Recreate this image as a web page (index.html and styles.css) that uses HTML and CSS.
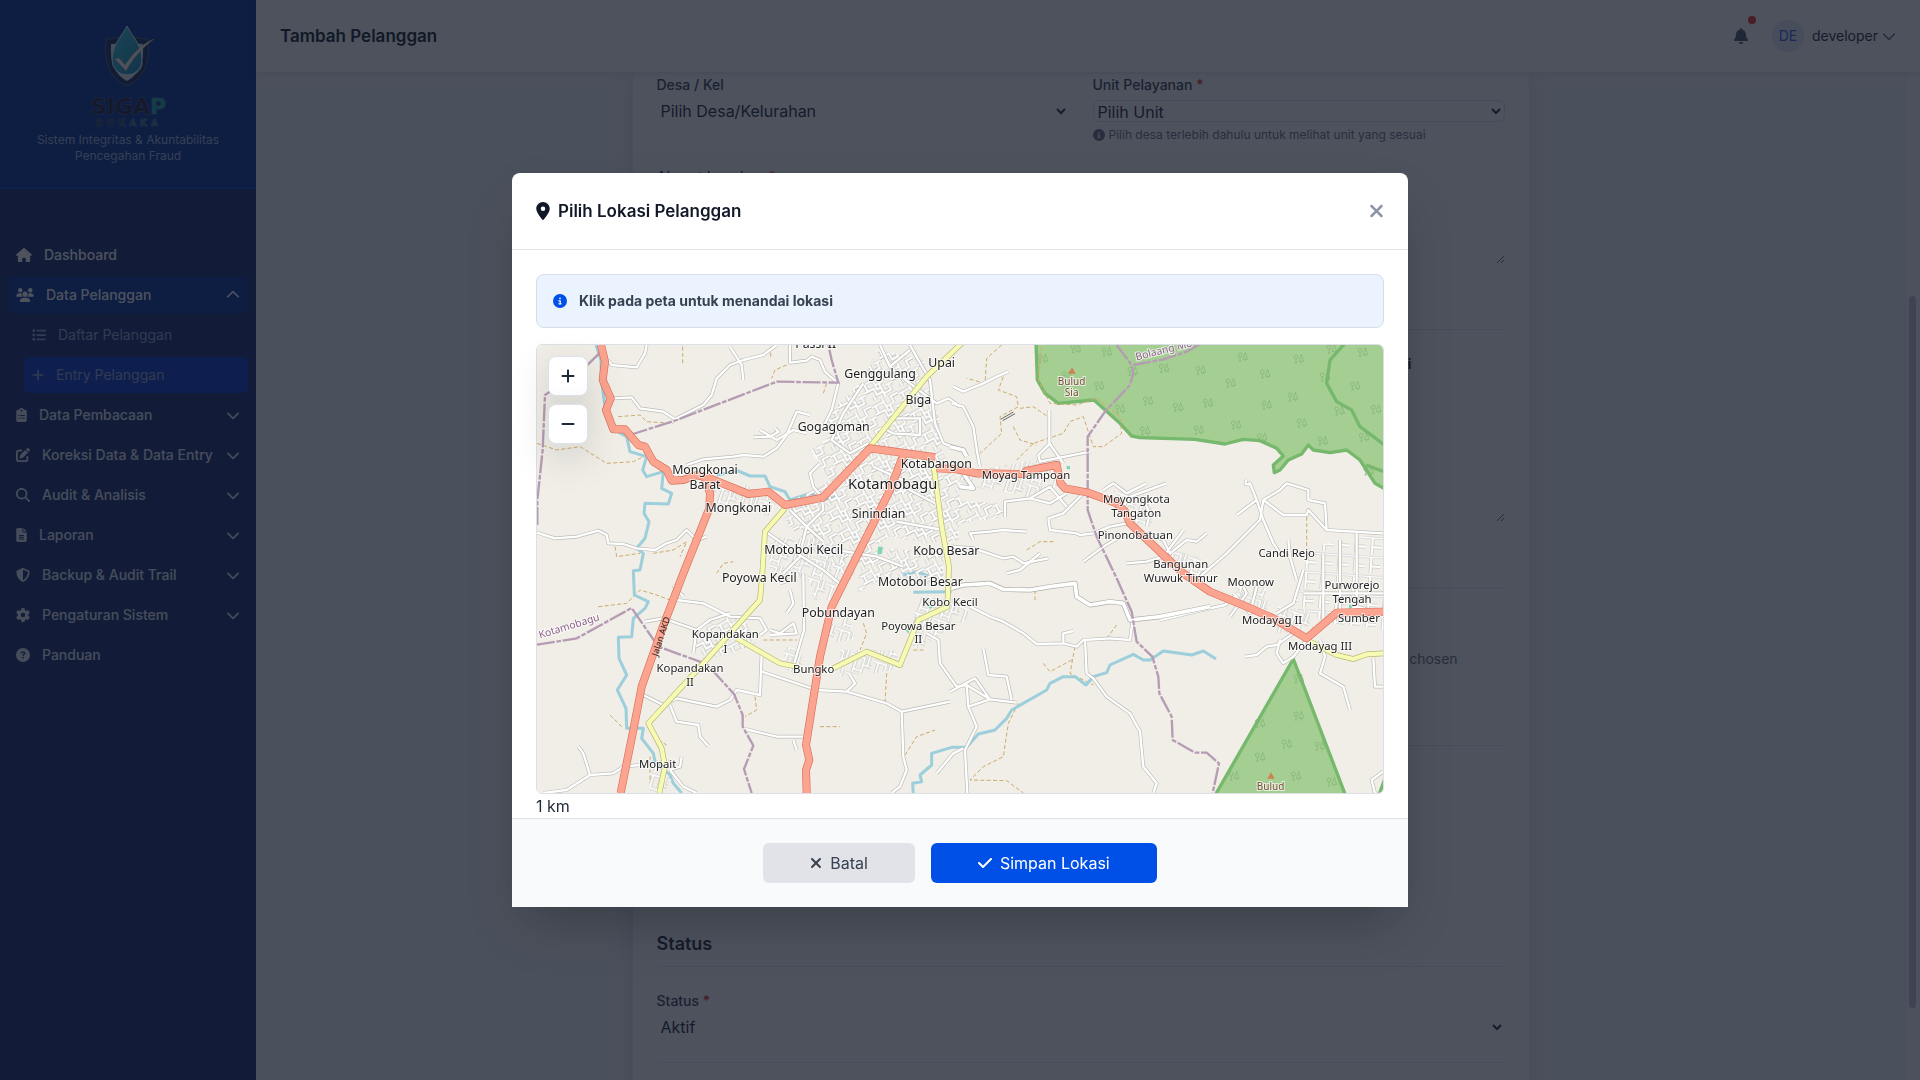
FILE: index.html
```html
<!DOCTYPE html>
<html lang="id">
<head>
<meta charset="utf-8">
<meta name="viewport" content="width=device-width, initial-scale=1">
<title>Tambah Pelanggan</title>
<link rel="stylesheet" href="styles.css">
</head>
<body>
<svg class="sprite" aria-hidden="true">
  <symbol id="i-home" viewBox="0 0 576 512"><path d="M575.8 255.5c0 18-15 32.1-32 32.1h-32l.7 160.2c0 2.7-.2 5.4-.5 8.1V472c0 22.1-17.9 40-40 40H456c-1.1 0-2.2 0-3.3-.1c-1.4 .1-2.8 .1-4.2 .1H416 392c-22.1 0-40-17.9-40-40V448 384c0-17.7-14.3-32-32-32H256c-17.7 0-32 14.3-32 32v64 24c0 22.1-17.9 40-40 40H160 128.1c-1.5 0-3-.1-4.5-.2c-1.2 .1-2.4 .2-3.6 .2H104c-22.1 0-40-17.9-40-40V360c0-.9 0-1.9 .1-2.8V287.6H32c-18 0-32-14-32-32.1c0-9 3-17 10-24L266.4 8c7-7 15-8 22-8s15 2 21 7L564.8 231.5c8 7 12 15 11 24z"/></symbol>
  <symbol id="i-users" viewBox="0 0 640 512"><circle cx="144" cy="80" r="80"/><circle cx="512" cy="80" r="80"/><circle cx="320" cy="224" r="96"/><path d="M0 298.700C0 239.800 47.800 192 106.700 192h42.700c15.900 0 31 3.500 44.600 9.700a128 128 0 0 0 41.200 118.300H21.300C9.600 320 0 310.400 0 298.700zM405.300 320h213.300c11.800 0 21.400-9.600 21.400-21.300C640 239.800 592.200 192 533.300 192h-42.700c-15.900 0-31 3.500-44.600 9.700a128 128 0 0 1-40.700 118.300zM128 485.300C128 411.700 187.700 352 261.300 352h117.400C452.300 352 512 411.700 512 485.300c0 14.700-11.900 26.700-26.700 26.700H154.700C140 512 128 500 128 485.300z"/></symbol>
  <symbol id="i-list" viewBox="0 0 512 512"><rect x="16" y="48" width="96" height="96" rx="24"/><rect x="16" y="208" width="96" height="96" rx="24"/><rect x="16" y="368" width="96" height="96" rx="24"/><rect x="160" y="64" width="352" height="64" rx="32"/><rect x="160" y="224" width="352" height="64" rx="32"/><rect x="160" y="384" width="352" height="64" rx="32"/></symbol>
  <symbol id="i-plus" viewBox="0 0 448 512"><path d="M256 80c0-17.700-14.300-32-32-32s-32 14.300-32 32V224H48c-17.700 0-32 14.300-32 32s14.300 32 32 32H192V432c0 17.700 14.300 32 32 32s32-14.300 32-32V288H400c17.700 0 32-14.300 32-32s-14.300-32-32-32H256V80z"/></symbol>
  <symbol id="i-minus" viewBox="0 0 448 512"><rect x="16" y="224" width="416" height="64" rx="32"/></symbol>
  <symbol id="i-clip" viewBox="0 0 384 512"><path fill-rule="evenodd" d="M192 0c-41.800 0-77.400 26.700-90.500 64H64C28.700 64 0 92.700 0 128V448c0 35.300 28.700 64 64 64H320c35.300 0 64-28.700 64-64V128c0-35.300-28.700-64-64-64H282.500C269.400 26.700 233.800 0 192 0zM192 64a32 32 0 1 1 0 64 32 32 0 1 1 0-64zM72 272a24 24 0 1 1 48 0 24 24 0 1 1-48 0zM160 256H304a16 16 0 0 1 0 32H160a16 16 0 0 1 0-32zM72 368a24 24 0 1 1 48 0 24 24 0 1 1-48 0zM160 352H304a16 16 0 0 1 0 32H160a16 16 0 0 1 0-32z"/></symbol>
  <symbol id="i-edit" viewBox="0 0 512 512"><path d="M471.600 21.700c-21.900-21.900-57.300-21.900-79.200 0L362.300 51.700l97.900 97.900 30.100-30.100c21.900-21.900 21.900-57.300 0-79.200L471.600 21.700zm-299.200 220c-6.100 6.100-10.800 13.600-13.500 21.900l-29.600 88.800c-2.900 8.600-.6 18.100 5.800 24.600s15.900 8.700 24.600 5.800l88.800-29.600c8.200-2.700 15.700-7.400 21.900-13.500L437.700 172.300 339.700 74.300 172.400 241.700zM96 64C43 64 0 107 0 160V416c0 53 43 96 96 96H352c53 0 96-43 96-96V320c0-17.700-14.300-32-32-32s-32 14.300-32 32v96c0 17.700-14.300 32-32 32H96c-17.700 0-32-14.300-32-32V160c0-17.700 14.300-32 32-32h96c17.700 0 32-14.300 32-32s-14.300-32-32-32H96z"/></symbol>
  <symbol id="i-search" viewBox="0 0 512 512"><path d="M416 208c0 45.900-14.900 88.300-40 122.700L502.600 457.400c12.500 12.500 12.500 32.800 0 45.300s-32.800 12.500-45.300 0L330.700 376c-34.400 25.200-76.800 40-122.700 40C93.100 416 0 322.900 0 208S93.100 0 208 0S416 93.100 416 208zM208 352a144 144 0 1 0 0-288 144 144 0 1 0 0 288z"/></symbol>
  <symbol id="i-file" viewBox="0 0 384 512"><path fill-rule="evenodd" d="M64 0C28.700 0 0 28.700 0 64V448c0 35.300 28.700 64 64 64H320c35.300 0 64-28.700 64-64V160H256c-17.700 0-32-14.300-32-32V0H64zM256 0V128H384L256 0zM112 256H272a16 16 0 0 1 0 32H112a16 16 0 0 1 0-32zM112 320H272a16 16 0 0 1 0 32H112a16 16 0 0 1 0-32zM112 384H272a16 16 0 0 1 0 32H112a16 16 0 0 1 0-32z"/></symbol>
  <symbol id="i-shield" viewBox="0 0 512 512"><path d="M256 0c4.600 0 9.200 1 13.400 2.900L457.700 82.800c22 9.300 38.400 31 38.300 57.200c-.5 99.200-41.300 280.700-213.600 363.200c-16.700 8-36.100 8-52.800 0C57.300 420.700 16.500 239.200 16 140c-.1-26.200 16.300-47.900 38.300-57.200L242.700 2.900C246.800 1 251.400 0 256 0zm0 66.800V444.800C394 378 431.100 230.100 432 141.400L256 66.800z"/></symbol>
  <symbol id="i-gear" viewBox="0 0 512 512"><path d="M495.900 166.600c3.200 8.700 .5 18.400-6.400 24.600l-43.300 39.400c1.100 8.300 1.700 16.800 1.700 25.400s-.6 17.100-1.700 25.400l43.300 39.400c6.900 6.200 9.600 15.900 6.400 24.600c-4.400 11.900-9.700 23.300-15.800 34.300l-4.700 8.100c-6.600 11-14 21.400-22.100 31.200c-5.900 7.200-15.700 9.600-24.500 6.800l-55.700-17.700c-13.400 10.300-28.200 18.900-44 25.400l-12.500 57.100c-2 9.100-9 16.300-18.200 17.800c-13.800 2.300-28 3.500-42.500 3.500s-28.700-1.200-42.500-3.500c-9.200-1.500-16.200-8.700-18.200-17.800l-12.500-57.100c-15.800-6.500-30.600-15.100-44-25.400L83.100 425.900c-8.800 2.800-18.600 .3-24.500-6.800c-8.100-9.800-15.500-20.200-22.100-31.200l-4.700-8.100c-6.100-11-11.400-22.400-15.800-34.300c-3.200-8.700-.5-18.400 6.400-24.600l43.300-39.400C64.600 273.100 64 264.600 64 256s.6-17.100 1.700-25.400L22.400 191.200c-6.900-6.200-9.600-15.900-6.400-24.600c4.400-11.900 9.700-23.300 15.800-34.300l4.700-8.100c6.600-11 14-21.400 22.100-31.200c5.900-7.200 15.700-9.600 24.500-6.800l55.700 17.700c13.400-10.300 28.200-18.900 44-25.400l12.500-57.100c2-9.100 9-16.300 18.200-17.800C227.300 1.200 241.500 0 256 0s28.700 1.200 42.500 3.500c9.200 1.500 16.200 8.700 18.200 17.800l12.500 57.100c15.800 6.500 30.600 15.100 44 25.400l55.700-17.700c8.800-2.800 18.600-.3 24.500 6.800c8.100 9.800 15.500 20.200 22.100 31.200l4.700 8.100c6.100 11 11.400 22.400 15.800 34.300zM256 336a80 80 0 1 0 0-160 80 80 0 1 0 0 160z"/></symbol>
  <symbol id="i-help" viewBox="0 0 512 512"><path d="M256 512A256 256 0 1 0 256 0a256 256 0 1 0 0 512zM169.800 165.300c7.900-22.300 29.100-37.300 52.800-37.300h58.300c34.900 0 63.100 28.300 63.100 63.100c0 22.600-12.100 43.500-31.700 54.800L280 264.400c-.2 13-10.900 23.600-24 23.600c-13.300 0-24-10.700-24-24V250.500c0-8.600 4.600-16.500 12.100-20.800l44.300-25.400c4.700-2.700 7.600-7.700 7.600-13.100c0-8.400-6.800-15.100-15.100-15.100H222.600c-3.400 0-6.400 2.100-7.500 5.300l-.4 1.200c-4.400 12.500-18.200 19-30.600 14.600s-19-18.200-14.600-30.600l.4-1.200zM224 352a32 32 0 1 1 64 0 32 32 0 1 1 -64 0z"/></symbol>
  <symbol id="i-info" viewBox="0 0 512 512"><path d="M256 512A256 256 0 1 0 256 0a256 256 0 1 0 0 512zM216 336h24V272H216c-13.300 0-24-10.700-24-24s10.700-24 24-24h48c13.300 0 24 10.700 24 24v88h8c13.300 0 24 10.700 24 24s-10.700 24-24 24H216c-13.300 0-24-10.700-24-24s10.700-24 24-24zm40-208a32 32 0 1 1 0 64 32 32 0 1 1 0-64z"/></symbol>
  <symbol id="i-down" viewBox="0 0 512 512"><path d="M233.400 406.600c12.500 12.500 32.800 12.500 45.300 0l192-192c12.500-12.500 12.500-32.800 0-45.300s-32.800-12.500-45.300 0L256 338.700 86.600 169.400c-12.500-12.500-32.800-12.500-45.300 0s-12.500 32.800 0 45.300l192 192z"/></symbol>
  <symbol id="i-bell" viewBox="0 0 448 512"><path d="M224 0c-17.700 0-32 14.300-32 32V51.200C119 66 64 130.600 64 208v18.800c0 47-17.300 92.400-48.500 127.600l-7.400 8.300c-8.400 9.400-10.400 22.900-5.300 34.400S19.400 416 32 416H416c12.600 0 24-7.400 29.200-18.900s3.100-25-5.300-34.400l-7.400-8.300C401.300 319.200 384 273.900 384 226.800V208c0-77.400-55-142-128-156.800V32c0-17.700-14.300-32-32-32zm45.300 493.300c12-12 18.700-28.300 18.700-45.300H224 160c0 17 6.700 33.300 18.700 45.300s28.300 18.700 45.300 18.700s33.300-6.700 45.300-18.700z"/></symbol>
  <symbol id="i-pin" viewBox="0 0 384 512"><path d="M215.700 499.200C267 435 384 279.400 384 192C384 86 298 0 192 0S0 86 0 192c0 87.400 117 243 168.300 307.200c12.300 15.300 35.100 15.300 47.400 0zM192 128a64 64 0 1 1 0 128 64 64 0 1 1 0-128z"/></symbol>
  <symbol id="i-x" viewBox="0 0 384 512"><path d="M342.600 150.600c12.500-12.500 12.500-32.800 0-45.300s-32.800-12.500-45.300 0L192 210.700 86.600 105.400c-12.500-12.500-32.800-12.500-45.300 0s-12.500 32.800 0 45.300L146.700 256 41.400 361.400c-12.500 12.500-12.500 32.800 0 45.300s32.800 12.500 45.300 0L192 301.300 297.400 406.600c12.500 12.500 32.800 12.500 45.300 0s12.500-32.800 0-45.300L237.300 256 342.600 150.600z"/></symbol>
  <symbol id="i-check" viewBox="0 0 448 512"><path d="M438.600 105.400c12.500 12.500 12.500 32.800 0 45.300l-256 256c-12.500 12.500-32.800 12.500-45.300 0l-128-128c-12.500-12.500-12.500-32.800 0-45.300s32.800-12.500 45.300 0L160 338.700 393.400 105.400c12.500-12.500 32.800-12.500 45.300 0z"/></symbol>
</svg>

<div class="app">
  <aside class="sidebar">
    <div class="brand">
      <svg class="logo" viewBox="0 0 80 100" role="img" aria-label="SIGAP BUKAKA">
        <defs>
          <linearGradient id="drop" x1="0" y1="0" x2="1" y2="1"><stop offset="0" stop-color="#35d0e0"/><stop offset="1" stop-color="#1585b5"/></linearGradient>
          <linearGradient id="name"><stop offset=".78" stop-color="#1d1f45"/><stop offset=".8" stop-color="#1aa3ad"/></linearGradient>
          <linearGradient id="sub"><stop offset=".3" stop-color="#22305c"/><stop offset=".6" stop-color="#1d7f9c"/></linearGradient>
        </defs>
        <path d="M39 9C33 13 26 15 18 15C16 36 20 54 39 62C58 54 62 36 60 15C52 15 45 13 39 9z" fill="#142b5c" stroke="#4a5a80"/>
        <path d="M39 16C34 19 29 20 23 20C22 38 26 50 39 57C52 50 56 38 55 20C49 20 44 19 39 16z" fill="#e3e9f0"/>
        <path d="M39 2C34 12 24 21 24 36a15 15 0 0 0 30 0C54 21 44 12 39 2z" fill="url(#drop)" stroke="#e8f6fa" stroke-width="1"/>
        <path d="M44 51a13 13 0 0 0 10-14" fill="none" stroke="#dff4fa" stroke-width="1"/>
        <path d="M27 35l4-1 6 7C45 29 54 20 66 15C54 24 45 34 38 47z" fill="#fff" stroke="#d8a24b" stroke-width=".5"/>
        <text x="3" y="90" class="logo-name">SIGAP</text>
        <text x="8" y="102" class="logo-sub">BUKAKA</text>
      </svg>
      <p class="tagline">Sistem Integritas &amp; Akuntabilitas Pencegahan Fraud</p>
    </div>
    <nav class="nav">
      <a href="#" class="nav-item bright"><svg class="ic w16"><use href="#i-home"/></svg><span>Dashboard</span></a>
      <a href="#" class="nav-item bright open"><svg class="ic w18"><use href="#i-users"/></svg><span>Data Pelanggan</span><svg class="chev up"><use href="#i-down"/></svg></a>
      <a href="#" class="nav-item sub"><svg class="ic w14"><use href="#i-list"/></svg><span>Daftar Pelanggan</span></a>
      <a href="#" class="nav-item sub current"><svg class="ic w12"><use href="#i-plus"/></svg><span>Entry Pelanggan</span></a>
      <a href="#" class="nav-item"><svg class="ic w11"><use href="#i-clip"/></svg><span>Data Pembacaan</span><svg class="chev"><use href="#i-down"/></svg></a>
      <a href="#" class="nav-item"><svg class="ic w14"><use href="#i-edit"/></svg><span>Koreksi Data &amp; Data Entry</span><svg class="chev"><use href="#i-down"/></svg></a>
      <a href="#" class="nav-item"><svg class="ic w14"><use href="#i-search"/></svg><span>Audit &amp; Analisis</span><svg class="chev"><use href="#i-down"/></svg></a>
      <a href="#" class="nav-item"><svg class="ic w11"><use href="#i-file"/></svg><span>Laporan</span><svg class="chev"><use href="#i-down"/></svg></a>
      <a href="#" class="nav-item"><svg class="ic w14"><use href="#i-shield"/></svg><span>Backup &amp; Audit Trail</span><svg class="chev"><use href="#i-down"/></svg></a>
      <a href="#" class="nav-item"><svg class="ic w14"><use href="#i-gear"/></svg><span>Pengaturan Sistem</span><svg class="chev"><use href="#i-down"/></svg></a>
      <a href="#" class="nav-item"><svg class="ic w14"><use href="#i-help"/></svg><span>Panduan</span></a>
    </nav>
  </aside>

  <div class="main">
    <header class="topbar">
      <h1>Tambah Pelanggan</h1>
      <div class="user-area">
        <button type="button" class="bell" aria-label="Notifikasi"><svg><use href="#i-bell"/></svg><span class="dot"></span></button>
        <button type="button" class="user"><span class="avatar">DE</span><span>developer</span><svg class="chev"><use href="#i-down"/></svg></button>
      </div>
    </header>
    <div class="scroller">
      <div class="page">
        <form class="card">
          <section class="sec sec-address">
            <div class="cols2">
              <div class="field">
                <label for="desa">Desa / Kel</label>
                <select id="desa"><option>Pilih Desa/Kelurahan</option></select>
              </div>
              <div class="field">
                <label for="unit">Unit Pelayanan <b>*</b></label>
                <select id="unit" class="outlined"><option>Pilih Unit</option></select>
                <p class="hint"><svg><use href="#i-info"/></svg>Pilih desa terlebih dahulu untuk melihat unit yang sesuai</p>
              </div>
            </div>
            <div class="field">
              <label for="alamat">Alamat Lengkap <b>*</b></label>
              <textarea id="alamat" class="short"></textarea>
            </div>
          </section>
          <section class="sec sec-place">
            <div class="place-row"><button type="button" class="pick">Pilih Lokasi</button></div>
            <textarea class="tall" aria-label="Catatan"></textarea>
          </section>
          <section class="sec sec-photo">
            <div class="cols3"><input type="file" class="file" aria-label="Foto"></div>
          </section>
          <section class="sec sec-status">
            <h2>Status</h2>
            <div class="field">
              <label for="status">Status <b>*</b></label>
              <select id="status"><option>Aktif</option></select>
            </div>
          </section>
          <section class="sec sec-actions"></section>
        </form>
      </div>
      <div class="track"><div class="thumb"></div></div>
    </div>
  </div>
</div>

<div class="overlay">
  <div class="modal" role="dialog" aria-modal="true" aria-labelledby="mt">
    <div class="modal-head">
      <h2 id="mt"><svg class="pin"><use href="#i-pin"/></svg>Pilih Lokasi Pelanggan</h2>
      <button type="button" class="close" aria-label="Tutup"><svg><use href="#i-x"/></svg></button>
    </div>
    <div class="modal-body">
      <div class="notice"><svg><use href="#i-info"/></svg><span>Klik pada peta untuk menandai lokasi</span></div>
      <div class="map">
        <svg class="map-art" viewBox="21 15 2538 1344" preserveAspectRatio="xMidYMid slice" role="img" aria-label="Peta Kotamobagu">
          <defs>
            <pattern id="town" width="150" height="120" patternUnits="userSpaceOnUse" patternTransform="rotate(-28) scale(.6)">
              <path d="M0 22H66V50H110M66 22V0M20 22V62H52V96H88M88 50V120M110 50V14H150M20 62H0M110 74H150M128 74V106H88M36 120V96M66 50V74H88" fill="none" stroke="#b4b4b0" stroke-width="17"/>
              <path d="M0 22H66V50H110M66 22V0M20 22V62H52V96H88M88 50V120M110 50V14H150M20 62H0M110 74H150M128 74V106H88M36 120V96M66 50V74H88" fill="none" stroke="#fff" stroke-width="11"/>
            </pattern>
            <pattern id="town2" width="96" height="84" patternUnits="userSpaceOnUse" patternTransform="rotate(18) scale(.7)">
              <path d="M0 14H60V44H96M24 14V84M60 44V70H24M78 44V0M60 70V84" fill="none" stroke="#b4b4b0" stroke-width="14"/>
              <path d="M0 14H60V44H96M24 14V84M60 44V70H24M78 44V0M60 70V84" fill="none" stroke="#fff" stroke-width="9"/>
            </pattern>
            <pattern id="grid" width="48" height="58" patternUnits="userSpaceOnUse" patternTransform="rotate(4)">
              <path d="M0 10H48M20 10V58M20 38H48" fill="none" stroke="#b8b8b4" stroke-width="9"/>
              <path d="M0 10H48M20 10V58M20 38H48" fill="none" stroke="#fff" stroke-width="6"/>
            </pattern>
            <g id="tree"><circle cx="-8" cy="-5" r="6"/><path d="M-8 1V13M-12 13H-4M8 -13L1 8H15zM8 8V14"/></g>
            <g id="minor">
              <path d="M235 60L245 75L320 82L345 40L350 15"/><path d="M250 175L305 172L330 205L400 215L435 238L460 225L520 195L545 165L560 115L600 75L640 60L700 45L740 15"/>
              <path d="M640 120L635 75L600 20"/><path d="M780 15L780 68L830 62L845 50L870 60L885 95L925 130L905 210L880 260"/><path d="M21 578L75 595L140 590L205 572L230 585L235 610L280 612L320 625L375 630L410 610L440 600L470 570L500 600L530 590"/>
              <path d="M470 375L520 358L610 350L640 345L700 350L740 325L770 285L800 215L840 225"/><path d="M670 292L720 290L745 275L735 265M690 270L740 300L790 270L830 280"/><path d="M1140 15L1165 60L1200 120L1215 250L1240 310L1290 328"/>
              <path d="M1050 15L1080 80L1140 30M1090 90L1140 130L1220 190L1255 175L1290 200"/><path d="M1000 130L940 220L905 300L960 340L1015 310"/><path d="M1085 235H1170V285L1090 280L1070 270"/>
              <path d="M870 370L840 400L850 440L875 470L880 510L830 560L815 620M780 510L830 560L880 605"/><path d="M1130 445L1215 490M1100 545L1240 570M1030 380L1160 440"/><path d="M920 630L1040 650L1120 680M700 570L800 640L880 690L940 740M760 700L810 650"/>
              <path d="M820 700L822 870L790 980M780 750L790 790L770 820M750 730L780 720"/><path d="M440 780L520 790L600 830L690 835L710 870L690 885"/><path d="M345 845L400 835L500 870L540 840L600 820M500 870L490 940"/>
              <path d="M430 735L460 770M720 870L750 880L790 850L800 880L720 885"/><path d="M340 1065L400 1095L440 1075L500 1088L560 1100L600 1080L620 1050L690 1065L695 940"/><path d="M420 1095L440 1145L505 1155L510 1190L535 1218"/>
              <path d="M645 1167L740 1190L820 1190M790 1200L800 1230"/><path d="M695 995L860 1050L950 1055L1070 1090L1115 1115L1260 1085M1115 1115L1120 1250L1130 1290L1110 1340L1085 1359"/><path d="M950 1055L975 1030L960 1005"/>
              <path d="M40 1359L110 1350L180 1305L250 1300L280 1280L330 1275M180 1305L160 1240L145 1220"/><path d="M1220 1300L1270 1240L1300 1225"/><path d="M420 1290L460 1340L500 1359M455 1250L450 1280L420 1290"/>
              <path d="M1190 880L1225 900L1230 970L1280 1040L1310 1035L1380 1078L1460 1088M1310 1035L1315 1100L1340 1160L1305 1230L1312 1359M1260 1055L1335 1015L1380 1078M1315 1100L1380 1078"/>
              <path d="M1360 925L1375 1005L1430 1010L1445 1080"/><path d="M1320 800L1380 830L1420 845L1480 880L1520 912L1600 910L1640 920L1660 900L1740 895L1800 900L1808 840M1600 910V880L1630 873M1665 900L1670 1000L1690 1015L1730 1070L1800 1120L1830 1175L1840 1280L1880 1330L1870 1359"/>
              <path d="M1270 140L1300 155L1360 130L1400 110L1435 95M1265 190L1300 200L1330 260L1342 340L1350 380M1558 210V310L1600 370M1560 310L1525 345L1530 365L1680 335"/><path d="M1330 600L1320 580L1380 575L1420 570L1490 575M1265 620L1330 625L1420 655L1450 650L1480 670L1555 655"/>
              <path d="M1425 530L1425 485L1500 475L1560 440L1610 500M1500 475L1560 490L1610 460M1660 460L1600 520L1555 535L1560 570L1640 580L1650 585L1690 580"/><path d="M1720 450L1750 430L1790 460L1850 430M1780 500L1800 470L1910 430M1690 580L1740 560L1790 550"/>
              <path d="M1660 665L1720 620L1770 590M1820 590L1860 580L1900 600L1920 640L1970 600L2000 605L2030 580M1850 560L1860 520L1840 480M1790 670L1850 665L1900 650L1960 570"/><path d="M2010 710L2090 640L2190 540L2200 480L2250 450L2270 430L2335 450L2335 480L2385 490L2390 570L2559 580"/>
              <path d="M2150 420Q2140 440 2160 430L2180 480L2200 540L2230 610L2250 640M2200 480L2260 525L2330 525L2335 510L2390 570M2120 525L2180 480"/><path d="M2275 600L2280 650L2300 720M2320 690L2290 790L2240 820M2559 820L2480 800L2360 860M2370 900L2385 950L2370 1000L2440 1040L2460 1110M2530 955L2535 1040L2559 1040"/>
              <path d="M2145 950L2180 945L2210 920L2240 915L2290 880M2250 900L2240 940L2260 970L2290 950L2330 900"/><path d="M2559 1295L2525 1320L2535 1359M1890 840L2040 805L2085 795L2120 765M1430 700L1470 690L1530 640"/>
              <path d="M2100 830L2150 760L2140 740M2110 760L2160 820L2180 740M2380 640V850M2430 600V850M2480 580V800M2320 760H2559"/>
            </g>
            <g id="major"><path d="M1265 745L1300 735L1380 730L1420 748L1500 750L1560 740L1635 730L1640 770L1680 795L1740 785L1780 790L1800 840L1890 830L2040 800"/><path d="M1290 440L1330 445L1300 400M1260 320L1300 330L1310 350"/></g>
            <g id="trunk">
              <path d="M213 15L225 65L218 120L242 175L228 210L250 268H285L325 315L345 320L370 365L410 390L425 422L460 420L500 405L540 415L655 462L715 455L765 495L878 473L1020 325L1215 352"/>
              <path d="M525 415L540 460L538 505L460 700L395 870L335 1040L310 1170L272 1359"/>
              <path d="M1120 345L1080 450L950 710L905 800L870 950L835 1170L828 1215L838 1260L828 1290L830 1359"/>
              <path d="M1220 385L1280 388L1340 400L1480 402L1490 392L1580 375L1592 430L1605 445L1675 458L1760 490L1785 515L1800 550L1900 645L1960 700L2040 755L2150 800L2230 835L2330 895L2420 818L2559 815"/>
            </g>
            <g id="second">
              <path d="M1300 5L1190 110L1020 320"/><path d="M765 505L705 575L697 700L690 780L600 880L520 970L355 1150L395 1225L405 1280L388 1359"/>
              <path d="M1212 385L1235 560L1257 680L1252 800L1165 840L1110 975L1010 935L910 985"/><path d="M620 895L750 970L800 980"/><path d="M2340 905L2420 945L2470 957L2510 943L2559 940"/>
            </g>
          </defs>
          <rect x="21" y="15" width="2538" height="1344" fill="#f0eee7"/>
          <g class="forest">
            <path d="M1518 5L1522 120L1545 160L1585 190L1692 180L1770 250L1805 288L1830 293L1995 298L2085 312L2140 298L2190 302L2240 325L2260 348L2230 375L2233 398L2250 390L2275 360L2315 342L2335 315L2350 330L2400 338L2450 330L2490 360L2535 430L2570 450V5z"/>
            <path d="M2290 957L2050 1375H2450z"/><path d="M2565 1315L2545 1370H2570z"/>
            <path class="line" d="M2445 10L2400 60L2390 130L2420 185L2465 210L2490 260L2562 314M2508 375L2562 395"/>
          </g>
          <g class="trees">
            <use href="#tree" x="1538" y="55"/><use href="#tree" x="1637" y="25"/><use href="#tree" x="1730" y="35"/><use href="#tree" x="1610" y="106"/><use href="#tree" x="1707" y="137"/><use href="#tree" x="1808" y="93"/><use href="#tree" x="1902" y="84"/><use href="#tree" x="2012" y="90"/><use href="#tree" x="2138" y="50"/><use href="#tree" x="2102" y="128"/><use href="#tree" x="2205" y="101"/><use href="#tree" x="2306" y="56"/><use href="#tree" x="2405" y="26"/><use href="#tree" x="2498" y="36"/><use href="#tree" x="2385" y="110"/><use href="#tree" x="2475" y="137"/><use href="#tree" x="1770" y="206"/><use href="#tree" x="1854" y="182"/><use href="#tree" x="1944" y="201"/><use href="#tree" x="2034" y="188"/><use href="#tree" x="2210" y="194"/><use href="#tree" x="2288" y="170"/><use href="#tree" x="2428" y="212"/><use href="#tree" x="2538" y="207"/><use href="#tree" x="1845" y="272"/><use href="#tree" x="2006" y="269"/><use href="#tree" x="2118" y="254"/><use href="#tree" x="2196" y="292"/><use href="#tree" x="2315" y="248"/><use href="#tree" x="2378" y="302"/><use href="#tree" x="2502" y="291"/><use href="#tree" x="2515" y="392"/>
            <use href="#tree" x="2306" y="1015"/><use href="#tree" x="2306" y="1127"/><use href="#tree" x="2190" y="1149"/><use href="#tree" x="2270" y="1211"/><use href="#tree" x="2369" y="1217"/><use href="#tree" x="2190" y="1250"/><use href="#tree" x="2112" y="1307"/><use href="#tree" x="2298" y="1307"/><use href="#tree" x="2405" y="1325"/>
          </g>
          <g class="trail">
            <path d="M265 230L330 225L350 245L430 250M21 310L80 330L150 320L230 370L310 365L350 345M458 70V20M722 50V20M770 75L735 90L725 115M880 160L890 130M205 800L290 790L330 750L380 765L420 780M240 1125L280 1165M255 620L260 650L330 640M370 640L430 630L470 605L450 650M560 700L580 670L610 665M700 900H800M1000 850L1010 880L990 930M675 1070L680 1110L645 1130M870 1160H930M1070 1000L1065 1090M1125 1245L1160 1190L1215 1170M385 1200L410 1215M360 1250V1330M1150 930L1180 930"/>
            <path d="M1415 15L1370 55L1365 130L1310 115M1420 110L1405 150L1460 170L1465 200L1410 230L1415 280L1345 345M1535 20L1525 120L1560 190L1640 195L1700 175L1770 230L1775 280L1720 320L1690 320L1660 230L1620 245L1600 280L1510 310L1460 360M1450 260L1470 300L1520 315M1470 205L1510 200L1560 235M1490 630L1530 605L1570 605M1540 970L1560 995L1625 960M1635 920L1620 1000L1690 1035M1465 1090L1435 1150L1420 1250L1360 1280L1320 1320L1430 1322L1480 1359M1730 895L1760 855M1515 750V780M2330 530V650"/>
          </g>
          <g class="river">
            <path d="M198 15L213 60L214 120L225 200L245 265L290 290L300 335L350 350L338 390L350 410L400 395L395 445L425 460L415 492L345 490L342 520L357 545L345 595L320 625L340 640L330 690L310 692L313 765L355 785L345 805L310 835L305 890L265 892L267 955L290 1005L262 1050L288 1105L290 1165L340 1165L335 1195L370 1240L375 1265L420 1305L430 1330L455 1359"/>
            <path d="M560 405L625 393L660 408H705L720 440L765 455L780 480L840 460L880 478L915 472M1120 705L1160 695L1200 710M1150 757L1265 755"/>
            <path d="M1150 1365L1148 1330L1175 1325L1170 1305L1205 1275V1240L1265 1222H1310L1345 1182L1395 1170L1430 1135L1445 1110L1550 1050L1560 1030L1600 1010H1635L1668 1035L1690 1010L1730 998L1740 975L1810 943L1840 960H1860L1900 933L1985 945L2020 933L2058 957"/>
          </g>
          <g class="towns">
            <path fill="url(#town)" d="M905 210L1000 120L1040 30L1180 60L1225 230L1240 340L1290 440L1285 600L1190 610L1080 590L1010 640L960 720L880 660L760 540L790 480L900 420L840 330L890 300L890 240z"/>
            <path fill="url(#town2)" d="M545 440L640 430L740 480L720 530L600 490L560 520z"/><path fill="url(#town2)" d="M715 590L870 600L950 640L900 780L850 780L840 720L720 690z"/><path fill="url(#town)" d="M1000 620L1240 640L1240 740L1050 720L980 760z"/>
            <path fill="url(#town2)" d="M895 820L960 830L970 900L900 910z"/><path fill="url(#town2)" d="M1170 770L1300 780L1320 830L1240 880L1170 930L1120 900z"/><path fill="url(#town)" d="M560 820L640 830L680 910L600 940L520 960L490 920z"/>
            <path fill="url(#town2)" d="M930 930L1090 930L1120 980L1040 1000L930 1010z"/><path fill="url(#town2)" d="M355 1260H430L420 1355H360z"/><path fill="url(#town2)" d="M1280 400L1400 380L1570 350L1600 430L1490 470L1400 450L1290 440z"/>
            <path fill="url(#town)" d="M1270 480L1400 490L1430 530L1290 550z"/><path fill="url(#town2)" d="M1750 450L1860 470L1870 550L1790 560z"/><path fill="url(#town2)" d="M1900 620L2010 650L2040 720L1960 700z"/><path fill="url(#town2)" d="M2110 720L2200 720L2220 810L2130 800z"/>
            <path fill="url(#grid)" d="M2340 620L2559 580V870L2400 850L2290 800z"/><path fill="url(#town2)" d="M2240 800L2340 810L2350 880L2240 880z"/><path fill="url(#town2)" d="M760 920L830 930L810 1010L770 990z"/>
          </g>
          <use href="#minor" class="minor-case"/><use href="#minor" class="minor-fill"/>
          <use href="#major" class="major-case"/><use href="#major" class="major-fill"/>
          <g fill="#7fd6b0"><path d="M1044 620h14l-2 22h-14z"/><path d="M1125 870l12 -4v14zM1196 795h10v10h-10zM1610 378h10v10h-10zM2457 794h9v10h-9z"/></g>
          <path d="M1412 238L1450 216M1418 242L1455 221" fill="none" stroke="#666" stroke-width="3"/>
          <g class="border"><path d="M210 38L172 75L45 165L38 330L22 480V560M300 285L440 240L740 125L925 128L905 60L895 15"/><path d="M21 914L140 895L305 804L385 920L530 972L612 1062L638 1125V1160L670 1217L642 1287L665 1359"/><path d="M1760 15L1805 75L1810 100L1800 135L1725 215L1673 290V510L1700 590L1760 715L1805 815L1820 905L1867 950L1885 1010L1888 1060L1925 1130L1928 1200L1995 1238H2030L2067 1270L2048 1359M1810 75L1900 58L1970 35L2010 12"/></g>
          <use href="#second" class="second-case"/><use href="#second" class="second-fill"/>
          <use href="#trunk" class="trunk-case"/><use href="#trunk" class="trunk-fill"/>
          <path d="M1626 82l11 19h-22zM2223 1297l11 19h-22z" fill="#d08050"/>
          <g class="labels">
            <text x="857" y="24">Passi II</text><text x="1050" y="115">Genggulang</text><text x="1235" y="82">Upai</text><text x="1165" y="192">Biga</text><text x="911" y="272">Gogagoman</text>
            <text x="525" y="401">Mongkonai</text><text x="525" y="446">Barat</text><text x="625" y="517">Mongkonai</text><text x="1088" y="446" class="city">Kotamobagu</text><text x="1219" y="384">Kotabangon</text>
            <text x="1046" y="533">Sinindian</text><text x="821" y="642">Motoboi Kecil</text><text x="1249" y="646">Kobo Besar</text><text x="688" y="725">Poyowa Kecil</text><text x="1171" y="738">Motoboi Besar</text>
            <text x="1260" y="797" class="small">Kobo Kecil</text><text x="925" y="830">Pobundayan</text><text x="1165" y="869" class="small">Poyowa Besar</text><text x="1165" y="910" class="small">II</text>
            <text x="586" y="894" class="small">Kopandakan</text><text x="586" y="938" class="small">I</text><text x="480" y="995" class="small">Kopandakan</text><text x="480" y="1037" class="small">II</text><text x="851" y="998" class="small">Bungko</text><text x="383" y="1284" class="small">Mopait</text>
            <text x="1488" y="416" class="small">Moyag Tampoan</text><text x="1819" y="490" class="small">Moyongkota</text><text x="1819" y="532" class="small">Tangaton</text><text x="1816" y="596" class="small">Pinonobatuan</text><text x="1952" y="684" class="small">Bangunan</text><text x="1952" y="726" class="small">Wuwuk Timur</text>
            <text x="2270" y="652" class="small">Candi Rejo</text><text x="2162" y="739" class="small">Moonow</text><text x="2466" y="746" class="small">Purworejo</text><text x="2466" y="788" class="small">Tengah</text><text x="2226" y="852" class="small">Modayag II</text><text x="2487" y="847" class="small">Sumber</text><text x="2370" y="930" class="small">Modayag III</text>
            <text x="1625" y="134" class="peak">Bulud</text><text x="1625" y="169" class="peak">Sia</text><text x="2222" y="1350" class="peak">Bulud</text>
            <text class="road" transform="translate(402 892) rotate(-72)">Jalan AKD</text>
            <text class="area" transform="translate(120 868) rotate(-17)">Kotamobagu</text><text class="area" transform="translate(1904 40) rotate(-14)">Bolaang Mo</text>
          </g>
        </svg>
        <div class="zoom"><button type="button" aria-label="Perbesar"><svg><use href="#i-plus"/></svg></button><button type="button" aria-label="Perkecil"><svg><use href="#i-minus"/></svg></button></div>
      </div>
      <div class="scale">1 km</div>
    </div>
    <div class="modal-foot">
      <button type="button" class="btn cancel"><svg class="x"><use href="#i-x"/></svg>Batal</button>
      <button type="button" class="btn save"><svg><use href="#i-check"/></svg>Simpan Lokasi</button>
    </div>
  </div>
</div>
</body>
</html>
```
FILE: styles.css
```css
* { box-sizing: border-box; }
body { margin: 0; font: 16px/24px Inter, "Liberation Sans", sans-serif; color: #1f2937; }
h1, h2, p { margin: 0; }
svg { display: block; fill: currentColor; flex: none; }
button, select, textarea, input { font: inherit; color: inherit; }
button { border: 0; background: none; padding: 0; }
a { color: inherit; text-decoration: none; }
.sprite { position: absolute; width: 0; height: 0; }

.app { display: flex; height: 100vh; overflow: hidden; }

.sidebar { width: 256px; flex: none; background: #152a72; color: #e4e8ef; }
.brand { padding: 24px 24px 24px; background: #003093; border-bottom: 1px solid #0838d0; text-align: center; }
.logo { width: 80px; height: 100px; margin: 0 auto 8px; overflow: visible; }
.logo-name { font: 700 22px "DejaVu Sans", sans-serif; fill: url(#name); stroke: #56618c; stroke-width: 1px; paint-order: stroke; }
.logo-sub { font: 700 9px "DejaVu Sans", sans-serif; letter-spacing: 4px; fill: url(#sub); stroke: #56618c; stroke-width: 1px; paint-order: stroke; }
.tagline { font-size: 12px; line-height: 16px; color: #a3b5d8; }
.nav { display: flex; flex-direction: column; gap: 4px; padding: 48px 8px; }
.nav-item { display: flex; align-items: center; gap: 12px; height: 36px; padding: 0 8px; border-radius: 6px; font-size: 14px; font-weight: 500; white-space: nowrap; }
.nav-item.bright { color: #fff; }
.nav-item.open { background: #003093; }
.nav-item.sub { margin-left: 16px; color: #93a1cb; font-weight: 400; }
.nav-item.current { background: #0534c7; }
.ic { height: 14px; }
.w11 { width: 11px; }
.w12 { width: 12px; }
.w14 { width: 14px; }
.w16 { width: 16px; }
.w18 { width: 18px; }
.chev { width: 14px; height: 14px; margin-left: auto; }
.up { transform: rotate(180deg); }

.main { flex: 1; min-width: 0; display: flex; flex-direction: column; background: #f8f9fb; }
.topbar { position: relative; z-index: 1; display: flex; align-items: center; justify-content: space-between; height: 73px; padding: 0 24px; background: #fff; border-bottom: 1px solid #e3e6ee; box-shadow: 0 2px 8px rgba(30, 40, 90, .1); flex: none; }
.topbar h1 { font-size: 17px; line-height: 28px; font-weight: 600; color: #111827; }
.user-area { display: flex; align-items: center; gap: 24px; }
.bell { position: relative; color: #4b5563; }
.bell svg { width: 14px; height: 16px; }
.dot { position: absolute; right: -8px; top: -12px; width: 8px; height: 8px; border-radius: 50%; background: #ef2b2b; }
.user { display: flex; align-items: center; gap: 8px; font-size: 14px; color: #1f2937; }
.user .chev { margin-left: -4px; color: #6b7280; }
.avatar { width: 32px; height: 32px; border-radius: 50%; background: #e5ebf8; color: #3161e8; line-height: 32px; text-align: center; font-size: 14px; }

.scroller { flex: 1; min-height: 0; display: flex; overflow: hidden; }
.page { flex: 1; min-width: 0; }
.card { max-width: 896px; margin: 0 auto; padding: 0 24px; background: #fff; box-shadow: 0 4px 24px rgba(30, 40, 110, .15); }
.track { width: 15px; flex: none; background: #fcfcfd; border-left: 1px solid #eceef3; padding: 223px 4px 72px 3px; }
.thumb { height: 100%; border-radius: 4px; background: #c4c7cd; }

.sec { border-bottom: 1px solid #e8eaf1; }
.field { display: flex; flex-direction: column; gap: 5px; }
.field label { font-size: 14px; line-height: 20px; font-weight: 500; color: #374151; }
.field b { color: #e02424; font-weight: 500; }
.field select { width: 100%; height: 22px; background: transparent; border: 0; border-radius: 6px; color: #1f2937; }
.field select.outlined { border: 1px solid #dfe3ec; }
.cols2 { display: grid; grid-template-columns: 1fr 1fr; gap: 24px; }
.cols3 { display: grid; grid-template-columns: 1fr 1fr 1fr; gap: 24px; }
.hint { display: flex; align-items: center; gap: 4px; font-size: 12px; line-height: 16px; color: #6b7280; }
.hint svg { width: 12px; height: 12px; }
textarea { display: block; width: 100%; border: 0; background: transparent; }
.short { height: 72px; }
.tall { height: 96px; }
.sec-address { padding: 2px 0 65px; }
.sec-address .cols2 { margin-bottom: 24px; }
.sec-place { padding: 22px 0 66px; }
.place-row { display: flex; justify-content: flex-end; padding: 0 93px 50px 0; }
.pick { font-size: 14px; font-weight: 600; color: #111827; }
.sec-photo { padding: 56px 0 72px; }
.file { grid-column: 3; font-size: 14px; line-height: 28px; color: #6b7280; }
.file::file-selector-button { border: 0; padding: 0 38px; margin-right: 8px; height: 28px; }
.sec-status { padding: 186px 0 24px; }
.sec-status h2 { font-size: 18px; line-height: 24px; font-weight: 600; color: #1f2937; padding-bottom: 10px; margin-bottom: 24px; border-bottom: 1px solid #e8eaf1; }
.sec-actions { padding: 24px; }

.overlay { position: fixed; inset: 0; z-index: 10; display: flex; align-items: center; justify-content: center; padding: 16px; background: rgba(17, 24, 39, .75); }
.modal { width: 100%; max-width: 896px; background: #fff; border-radius: 8px 8px 0 0; box-shadow: 0 25px 50px -12px rgba(0, 0, 0, .25); }
.modal-head { display: flex; align-items: center; justify-content: space-between; padding: 24px; border-bottom: 1px solid #e2e4e8; }
.modal-head h2 { display: flex; align-items: center; gap: 8px; font-size: 17px; line-height: 28px; font-weight: 600; color: #111827; }
.pin { width: 14px; height: 18px; }
.close { color: #8b95a5; }
.close svg { width: 15px; height: 20px; }
.modal-body { padding: 24px 24px 0; }
.notice { display: flex; align-items: center; gap: 12px; padding: 16px; margin-bottom: 16px; background: #ebf3ff; border: 1px solid #d6dde8; border-radius: 8px; font-size: 14px; line-height: 20px; font-weight: 700; color: #374151; }
.notice svg { width: 14px; height: 14px; color: #0050e8; }
.map { position: relative; height: 450px; border: 1px solid #dcdfe8; border-radius: 6px; }
.map-art { width: 100%; height: 100%; border-radius: 5px; }
.zoom { position: absolute; left: 11px; top: 11px; display: flex; flex-direction: column; gap: 8px; }
.zoom button { width: 40px; height: 40px; display: grid; place-items: center; background: #fff; border: 1px solid #dce1eb; border-radius: 8px; color: #1f2937; box-shadow: 0 12px 40px rgba(0, 0, 0, .15); }
.zoom svg { width: 14px; height: 16px; }
.scale { color: #1f2937; }
.modal-foot { display: flex; justify-content: center; gap: 16px; padding: 24px; background: #f8fafc; border-top: 1px solid #dfe2e8; }
.btn { display: flex; align-items: center; gap: 8px; height: 40px; padding: 0 47px; border-radius: 6px; }
.btn svg { width: 14px; height: 16px; }
.btn svg.x { width: 12px; }
.cancel { background: #e1e3e8; color: #374151; }
.save { background: #0050e8; color: #fff; }

.forest path { fill: #a5ce92; stroke: #76b86c; stroke-width: 10px; stroke-linejoin: round; }
.forest .line { fill: none; }
.trees use { fill: none; stroke: #7eb274; stroke-width: 2px; }
.trail path { fill: none; stroke: #ccaa6c; stroke-width: 3px; stroke-dasharray: 12 7; }
.river path { fill: none; stroke: #9ccedb; stroke-width: 9px; stroke-linejoin: round; }
.border path { fill: none; stroke: #b59cb4; stroke-width: 7px; stroke-dasharray: 54 5 14 5; }
#minor, #major, #trunk, #second { fill: none; stroke-linejoin: round; }
.minor-case { stroke: #bcbcb8; stroke-width: 11px; }
.minor-fill { stroke: #fff; stroke-width: 7px; }
.major-case { stroke: #acaca8; stroke-width: 15px; }
.major-fill { stroke: #fff; stroke-width: 11px; }
.second-case { stroke: #b7b96c; stroke-width: 17px; }
.second-fill { stroke: #f6fab4; stroke-width: 13px; }
.trunk-case { stroke: #de6f5a; stroke-width: 24px; }
.trunk-fill { stroke: #fba48f; stroke-width: 20px; }
.labels text { font: 37px "Noto Sans", sans-serif; fill: #222; text-anchor: middle; stroke: rgba(255, 255, 255, .7); stroke-width: 6px; paint-order: stroke; }
.labels .city { font-size: 44px; }
.labels .small { font-size: 34px; }
.labels .peak { font-size: 30px; fill: #7a4a33; }
.labels .road { font-size: 27px; stroke: none; }
.labels .area { font-size: 31px; fill: #8d618b; }
```
